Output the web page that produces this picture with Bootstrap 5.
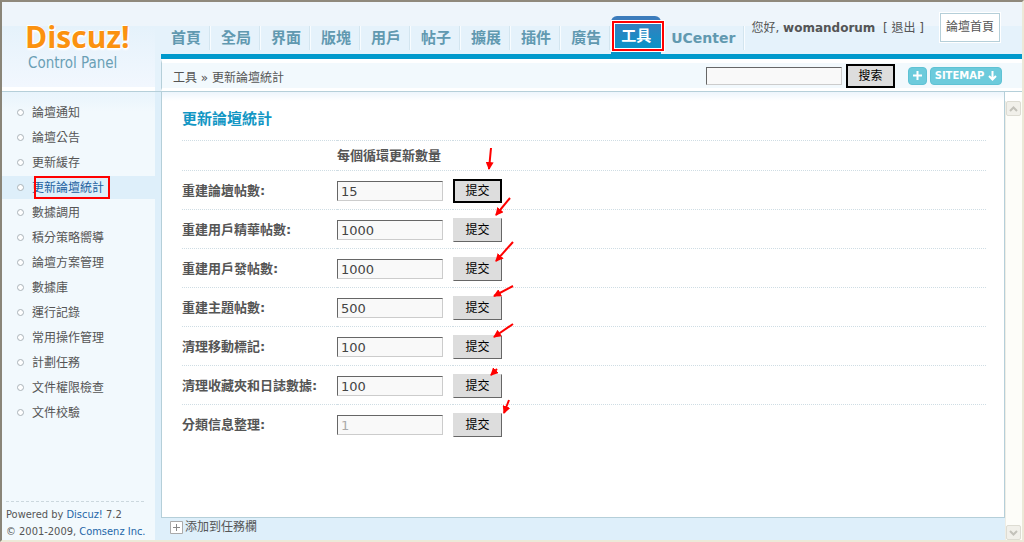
<!DOCTYPE html>
<html lang="zh-Hant">
<head>
<meta charset="utf-8">
<meta name="viewport" content="width=device-width, initial-scale=1">
<title>Discuz! Control Panel</title>
<link href="https://cdn.jsdelivr.net/npm/bootstrap@5.3.0/dist/css/bootstrap.min.css" rel="stylesheet">
<style>
:root { --line:#b5cfd9; --pale:#f2f9fd; --sky:#deeffa; --blue:#09c; --ink:#555; --mark:#f00; }
body { font:12px/16px "DejaVu Sans","Noto Sans CJK TC",sans-serif; color:var(--ink); background:#fff; }
a { color:inherit; text-decoration:none; }
.frame { border:2px solid #8a8578; border-top-color:#8f897c; border-right-color:#ece9d8; border-bottom-color:#ece9d8; }
.top-area { background:linear-gradient(#eef5fb 0 24px,#e5f2fb 24px 100%); border-bottom:1px solid var(--line); }
.brand-box { width:153px; padding-top:18px; background:linear-gradient(#eef5fb 0 24px,#e5f2fb 24px,#f2f7fe); border-bottom:4px solid #fff; }
.brand-name { font:700 30px/34px "Open Sans",sans-serif; color:#fb9210; text-shadow:1px 1px 0 #fff,-1px -1px 0 #fff,0 2px 2px #fff; padding-left:23px; }
.brand-sub { font:15px/18px "DejaVu Sans Condensed","DejaVu Sans",sans-serif; color:#6a9fb5; padding-left:26px; }
.tab-row { height:52px; padding-left:6px; }
.tab-link { font-size:15px; font-weight:700; color:#6199b0; padding:0 9px 0 10px; border-right:1px solid #f8fcff; box-shadow:inset -1px 0 #d3e5ef; height:24px; line-height:24px; margin-bottom:4px; white-space:nowrap; }
.tab-link.latin { font-size:14px; }
.tab-link.current { height:38px; line-height:40px; margin:0; color:#fff; border:0; padding:0 10px; background:linear-gradient(#3c7cbc 4px,#0994c8 32px); border-radius:6px 6px 0 0; box-shadow:none; }
.red-frame { position:absolute; border:2px solid var(--mark); box-shadow:0 0 0 1px #fff,inset 0 0 0 1px #fff; pointer-events:none; }
.red-frame.on-tab { inset:5px -3px 3px 1px; }
.red-frame.on-menu { inset:0 45px 0 32px; box-shadow:none; }
.user-line { padding:18px 16px 0 0; white-space:nowrap; }
.home-link { border:1px solid var(--line); outline:1px solid #fff; background:#fff; height:29px; line-height:26px; width:60px; margin:11px 22px 0 0; text-align:center; white-space:nowrap; }
.crumb-bar { margin-left:6px; border-top:5px solid var(--blue); }
.crumb-inner { border-left:1px solid var(--line); border-top:4px solid #fff; border-bottom:3px solid #fff; background:var(--pale); height:32px; padding:0 20px 0 11px; }
.field { border:1px solid; border-color:#666 #ccc #ccc #666; background:#f9f9f9; color:#444; font-size:13px; line-height:16px; padding:1px 3px; border-radius:0; }
.field:disabled { color:#aaa; }
.search-field { width:136px; height:18px; }
.push { width:49px; height:24px; padding:0; font-size:12px; line-height:20px; color:#000; background:#ddd; border:1px solid; border-color:#ddd #666 #666 #ddd; border-radius:0; }
.push.lead-btn { border:2px solid #000; }
.pill { background:#6ccbdc; color:#fff; border:1px solid #5fc2d4; border-radius:4px; height:18px; padding:0; display:flex; align-items:center; justify-content:center; font:700 10px/16px "DejaVu Sans",sans-serif; }
.pill-plus { width:19px; }
.pill-map { width:72px; margin-left:3px; }
.side { width:153px; background:linear-gradient(#e8f4fc,#f2f9fd 20px); }
.side-menu { padding-top:9px; }
.side-menu a { display:flex; align-items:center; gap:8px; height:23px; margin-bottom:2px; padding-left:15px; position:relative; }
.side-menu a::before { content:""; width:7px; height:7px; border:1px solid #aab3b8; border-radius:50%; background:#fff; }
.side-menu a.chosen { background:var(--sky); color:#1c5f9f; }
.legal { margin:0 11px 0 4px; font:11px/17px "DejaVu Sans Condensed","DejaVu Sans",sans-serif; white-space:nowrap; padding-top:4px; border-top:1px dashed #ccd8de; }
.legal a { color:#2366a8; }
.work { background:var(--sky); padding-left:6px; }
.sheet { border:1px solid var(--line); border-top:0; background:linear-gradient(#edf5fc,#fff 9px); padding:14px 18px 0 20px; }
.sheet h1 { font-size:15px; line-height:26px; font-weight:700; color:#1296c4; margin:0 0 8px; }
.tools { width:100%; font-weight:700; font-size:13px; }
.tools tr { border-top:1px dotted #cfdde4; height:39px; }
.tools tr.heading { height:30px; }
.tools th,.tools td { padding:2px 0 0; }
.tools .heading th { padding:0; }
.tools .col-a { width:155px; }
.tools .col-b { width:116px; }
.tools .field { width:106px; height:20px; display:block; }
.tools .push { display:block; }
.arrow { position:absolute; left:20px; top:-34px; width:50px; height:50px; overflow:visible; pointer-events:none; }
.task-bar { height:22px; line-height:16px; padding:0 0 4px 9px; gap:2px; }
.roller { width:17px; background:#fdfdf9; border-left:1px solid #eeede5; margin-top:9px; }
.roller-area { background:#fff; }
.roller-btn { width:15px; height:15px; border:1px solid #dddcd3; border-radius:2px; background:#f1f0ea; padding:0; display:flex; align-items:center; justify-content:center; }
</style>
</head>
<body>
<div class="frame vh-100 d-flex flex-column">
  <header class="top-area d-flex">
    <div class="brand-box flex-shrink-0">
      <div class="brand-name">Discuz!</div>
      <div class="brand-sub">Control Panel</div>
    </div>
    <div class="flex-grow-1 d-flex flex-column">
      <div class="tab-row d-flex">
        <nav class="d-flex align-items-end">
          <a class="tab-link" href="#">首頁</a>
          <a class="tab-link" href="#">全局</a>
          <a class="tab-link" href="#">界面</a>
          <a class="tab-link" href="#">版塊</a>
          <a class="tab-link" href="#">用戶</a>
          <a class="tab-link" href="#">帖子</a>
          <a class="tab-link" href="#">擴展</a>
          <a class="tab-link" href="#">插件</a>
          <a class="tab-link" href="#">廣告</a>
          <a class="tab-link current position-relative" href="#">工具<span class="red-frame on-tab"></span></a>
          <a class="tab-link latin" href="#">UCenter</a>
        </nav>
        <div class="user-line ms-auto">您好, <b>womandorum</b>&nbsp; [ <a href="#">退出</a> ]</div>
        <a class="home-link flex-shrink-0" href="#">論壇首頁</a>
      </div>
      <div class="crumb-bar">
        <div class="crumb-inner d-flex align-items-center">
          <div class="pt-1">工具 » 更新論壇統計</div>
          <form class="d-flex align-items-center ms-auto gap-1" onsubmit="return false">
            <input class="field search-field" type="text" aria-label="搜索">
            <button class="push lead-btn">搜索</button>
          </form>
          <button class="pill pill-plus" style="margin-left:13px" aria-label="+"><svg width="11" height="11" viewBox="0 0 11 11"><path d="M5.500 1v9M1 5.500h9" stroke="#fff" stroke-width="2"/></svg></button>
          <button class="pill pill-map gap-1">SITEMAP<svg width="9" height="10" viewBox="0 0 9 10"><path d="M4.500 0v8M1 5l3.500 3.500L8 5" fill="none" stroke="#fff" stroke-width="2"/></svg></button>
        </div>
      </div>
    </div>
  </header>
  <div class="d-flex flex-grow-1">
    <aside class="side flex-shrink-0 d-flex flex-column">
      <nav class="side-menu">
        <a href="#">論壇通知</a>
        <a href="#">論壇公告</a>
        <a href="#">更新緩存</a>
        <a class="chosen" href="#">更新論壇統計<span class="red-frame on-menu"></span></a>
        <a href="#">數據調用</a>
        <a href="#">積分策略嚮導</a>
        <a href="#">論壇方案管理</a>
        <a href="#">數據庫</a>
        <a href="#">運行記錄</a>
        <a href="#">常用操作管理</a>
        <a href="#">計劃任務</a>
        <a href="#">文件權限檢查</a>
        <a href="#">文件校驗</a>
      </nav>
      <div class="legal mt-auto">Powered by <a href="#">Discuz!</a> 7.2<br>© 2001-2009, <a href="#">Comsenz Inc.</a></div>
    </aside>
    <div class="work flex-grow-1 d-flex flex-column">
      <main class="sheet flex-grow-1">
        <h1>更新論壇統計</h1>
        <table class="tools">
          <tr class="heading"><td class="col-a"></td><th colspan="2">每個循環更新數量</th></tr>
          <tr><th class="col-a"><label for="f1">重建論壇帖數:</label></th><td class="col-b"><input id="f1" class="field" value="15"></td><td><div class="position-relative"><button class="push lead-btn">提交</button><svg class="arrow" viewBox="0 0 50 50"><use href="#a1"/></svg></div></td></tr>
          <tr><th><label for="f2">重建用戶精華帖數:</label></th><td><input id="f2" class="field" value="1000"></td><td><div class="position-relative"><button class="push">提交</button><svg class="arrow" viewBox="0 0 50 50"><use href="#a2"/></svg></div></td></tr>
          <tr><th><label for="f3">重建用戶發帖數:</label></th><td><input id="f3" class="field" value="1000"></td><td><div class="position-relative"><button class="push">提交</button><svg class="arrow" viewBox="0 0 50 50"><use href="#a3"/></svg></div></td></tr>
          <tr><th><label for="f4">重建主題帖數:</label></th><td><input id="f4" class="field" value="500"></td><td><div class="position-relative"><button class="push">提交</button><svg class="arrow" viewBox="0 0 50 50"><use href="#a4"/></svg></div></td></tr>
          <tr><th><label for="f5">清理移動標記:</label></th><td><input id="f5" class="field" value="100"></td><td><div class="position-relative"><button class="push">提交</button><svg class="arrow" viewBox="0 0 50 50"><use href="#a5"/></svg></div></td></tr>
          <tr><th><label for="f6">清理收藏夾和日誌數據:</label></th><td><input id="f6" class="field" value="100"></td><td><div class="position-relative"><button class="push">提交</button><svg class="arrow" viewBox="0 0 50 50"><use href="#a6"/></svg></div></td></tr>
          <tr><th><label for="f7">分類信息整理:</label></th><td><input id="f7" class="field" value="1" disabled></td><td><div class="position-relative"><button class="push">提交</button><svg class="arrow" viewBox="0 0 50 50"><use href="#a7"/></svg></div></td></tr>
        </table>
      </main>
      <div class="task-bar d-flex align-items-center">
        <svg width="13" height="13" viewBox="0 0 13 13"><path d="M.5.5h12v12H.5z" fill="#fff" stroke="#aaa"/><path d="M3 6.500h7M6.500 3v7" stroke="#888"/></svg>
        <a href="#">添加到任務欄</a>
      </div>
    </div>
    <div class="roller-area flex-shrink-0 d-flex">
      <div class="roller d-flex flex-column justify-content-between">
        <button class="roller-btn" aria-label="▲"><svg width="9" height="6" viewBox="0 0 9 6"><path d="M1 5l3.500-3.500L8 5" fill="none" stroke="#c3c2ba" stroke-width="2"/></svg></button>
        <button class="roller-btn" aria-label="▼"><svg width="9" height="6" viewBox="0 0 9 6"><path d="M1 1l3.500 3.500L8 1" fill="none" stroke="#c3c2ba" stroke-width="2"/></svg></button>
      </div>
    </div>
  </div>
</div>
<!-- Hand-drawn pointers; the origin is 20px right of and 34px above each button -->
<svg width="0" height="0" class="position-absolute">
  <defs>
    <marker id="tip" viewBox="0 0 8 8" refX="7" refY="4" markerWidth="8" markerHeight="8" markerUnits="userSpaceOnUse" orient="auto"><path d="M0 0l8 4-8 4z" fill="#f00"/></marker>
    <g id="a1" stroke="#f00" stroke-width="2"><path d="M18 3l-2 21" marker-end="url(#tip)"/></g>
    <g id="a2" stroke="#f00" stroke-width="2"><path d="M37 14L23 31" marker-end="url(#tip)"/></g>
    <g id="a3" stroke="#f00" stroke-width="2"><path d="M40 19L23 38" marker-end="url(#tip)"/></g>
    <g id="a4" stroke="#f00" stroke-width="2"><path d="M40 24L21 34" marker-end="url(#tip)"/></g>
    <g id="a5" stroke="#f00" stroke-width="2"><path d="M40 23L21 36" marker-end="url(#tip)"/></g>
    <g id="a6" stroke="#f00" stroke-width="2"><path d="M24 29L18 35" marker-end="url(#tip)"/></g>
    <g id="a7" stroke="#f00" stroke-width="2"><path d="M36 21L31 34" marker-end="url(#tip)"/></g>
  </defs>
</svg>
<script src="https://cdn.jsdelivr.net/npm/bootstrap@5.3.0/dist/js/bootstrap.bundle.min.js"></script>
</body>
</html>
